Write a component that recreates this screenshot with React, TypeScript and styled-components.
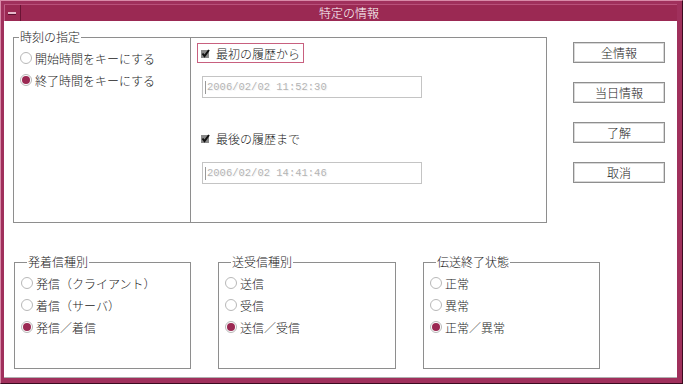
import { createGlobalStyle, styled } from "styled-components";

const GlobalStyle = createGlobalStyle`
  html, body {
    margin: 0;
    padding: 0;
    width: 683px;
    height: 384px;
    overflow: hidden;
    background: #ffffff;
  }
  body {
    font-family: "Noto Sans CJK JP", "Noto Sans", sans-serif;
    font-size: 12px;
    font-weight: 300;
    color: #1a1a1a;
  }
`;

const Frame = styled.div`
  width: 683px;
  height: 384px;
  box-sizing: border-box;
  background: #a0305c;
  border-top: 1px solid #d88aa8;
  border-left: 1px solid #d88aa8;
  border-right: 1px solid #3c0b20;
  border-bottom: 1px solid #3c0b20;
  padding: 3px 5px 5px 3px;
  display: flex;
  flex-direction: column;
`;

const TitleBar = styled.div`
  height: 17px;
  display: flex;
  background: #9b2953;
  border-top: 1px solid #b9507a;
  box-sizing: border-box;
`;

const MinBox = styled.div`
  width: 16px;
  display: flex;
  align-items: center;
  justify-content: center;
  border-right: 1px solid #6a1434;
  box-shadow: inset 1px 0 0 #c06088;
`;

const MinBar = styled.div`
  width: 8px;
  height: 2px;
  background: #e6b8ca;
  border-bottom: 1px solid #5a1030;
`;

const Title = styled.div`
  flex: 1;
  text-align: center;
  color: #ffffff;
  font-size: 12px;
  line-height: 16px;
`;

const Body = styled.div`
  flex: 1;
  background: #ffffff;
  border-bottom: 1px solid #b0b0b0;
  display: flex;
  flex-direction: column;
`;

const TopRow = styled.div`
  display: flex;
  align-items: flex-start;
  padding: 9px 0 0 9px;
`;

const BottomRow = styled.div`
  display: flex;
  align-items: flex-start;
  padding: 32px 0 0 10px;
  gap: 27px;
`;

const Group = styled.div<{ $w: number; $h: number }>`
  width: ${({ $w }) => $w}px;
  height: ${({ $h }) => $h}px;
  margin-top: 7px;
  box-sizing: border-box;
  border: 1px solid #8e8e8e;
  display: flex;
  flex-direction: column;
  padding-left: 6px;
`;

const GroupTitle = styled.div<{ $indent: number }>`
  align-self: flex-start;
  margin: -8px 0 3px ${({ $indent }) => $indent}px;
  padding: 0 1px;
  background: #ffffff;
  line-height: 14px;
`;

const RadioRow = styled.div`
  height: 22px;
  display: flex;
  align-items: center;
  gap: 3px;
  white-space: nowrap;
`;

const RadioDot = styled.span<{ $on?: boolean }>`
  width: 12px;
  height: 12px;
  box-sizing: border-box;
  border-radius: 50%;
  border: 1px solid #b8b8b8;
  background: #ffffff;
  display: flex;
  align-items: center;
  justify-content: center;
  &::after {
    content: "";
    width: 8px;
    height: 8px;
    border-radius: 50%;
    background: ${({ $on }) => ($on ? "#9b2953" : "transparent")};
  }
`;

const RangeBox = styled.div`
  width: 357px;
  height: 186px;
  margin: 7px 0 0 -1px;
  box-sizing: border-box;
  border: 1px solid #8e8e8e;
  display: flex;
  flex-direction: column;
  align-items: flex-start;
  padding: 5px 0 0 6px;
`;

const CheckRow = styled.div<{ $focus?: boolean; $top?: number }>`
  height: 20px;
  box-sizing: border-box;
  margin-top: ${({ $top }) => $top ?? 0}px;
  border: 1px solid ${({ $focus }) => ($focus ? "#c8607f" : "transparent")};
  display: flex;
  align-items: center;
  gap: 6px;
  padding: 0 3px;
  white-space: nowrap;
`;

const DateField = styled.div<{ $top: number }>`
  width: 220px;
  height: 22px;
  box-sizing: border-box;
  margin: ${({ $top }) => $top}px 0 0 5px;
  border: 1px solid #c4c4c4;
  display: flex;
  align-items: center;
  padding-left: 2px;
  font-family: "Liberation Mono", "DejaVu Sans Mono", monospace;
  font-size: 10.5px;
  color: #b4b4b4;
  text-shadow: 1px 1px 0 #f4f4f4;
`;

const Caret = styled.span`
  width: 1px;
  height: 13px;
  background: #9a9a9a;
  margin-right: 1px;
`;

const ButtonColumn = styled.div`
  display: flex;
  flex-direction: column;
  gap: 19px;
  margin: 12px 0 0 26px;
`;

const Button = styled.button`
  width: 92px;
  height: 21px;
  box-sizing: border-box;
  background: #ffffff;
  border: 1px solid #8e8e8e;
  box-shadow: inset 1px 1px 0 #d8d8d8, inset -1px -1px 0 #d8d8d8;
  font-family: "Noto Sans CJK JP", sans-serif;
  font-size: 12px;
  font-weight: 300;
  color: #1a1a1a;
  padding: 0;
  line-height: 18px;
`;

function CheckMark() {
  return (
    <svg width="9" height="9" viewBox="0 0 9 9">
      <rect x="0" y="1" width="8" height="8" fill="#8a8a8a" />
      <path d="M1.5 4.5 L3.5 7 L8 1" stroke="#111" strokeWidth="2" fill="none" />
    </svg>
  );
}

type RadioGroupProps = {
  title: string;
  items: string[];
  selected: number;
  indent: number;
  w: number;
  h: number;
};

function RadioGroup({ title, items, selected, indent, w, h }: RadioGroupProps) {
  return (
    <Group $w={w} $h={h}>
      <GroupTitle $indent={indent}>{title}</GroupTitle>
      {items.map((label, i) => (
        <RadioRow key={label}>
          <RadioDot $on={i === selected} />
          {label}
        </RadioRow>
      ))}
    </Group>
  );
}

export default function App() {
  return (
    <>
      <GlobalStyle />
      <Frame>
        <TitleBar>
          <MinBox>
            <MinBar />
          </MinBox>
          <Title>特定の情報</Title>
        </TitleBar>
        <Body>
          <TopRow>
            <RadioGroup
              title="時刻の指定"
              items={["開始時間をキーにする", "終了時間をキーにする"]}
              selected={1}
              indent={-1}
              w={178}
              h={186}
            />
            <RangeBox>
              <CheckRow $focus>
                <CheckMark />
                最初の履歴から
              </CheckRow>
              <DateField $top={13}>
                <Caret />
                2006/02/02 11:52:30
              </DateField>
              <CheckRow $top={30}>
                <CheckMark />
                最後の履歴まで
              </CheckRow>
              <DateField $top={14}>
                <Caret />
                2006/02/02 14:41:46
              </DateField>
            </RangeBox>
            <ButtonColumn>
              <Button>全情報</Button>
              <Button>当日情報</Button>
              <Button>了解</Button>
              <Button>取消</Button>
            </ButtonColumn>
          </TopRow>
          <BottomRow>
            <RadioGroup
              title="発着信種別"
              items={["発信（クライアント）", "着信（サーバ）", "発信／着信"]}
              selected={2}
              indent={6}
              w={177}
              h={107}
            />
            <RadioGroup
              title="送受信種別"
              items={["送信", "受信", "送信／受信"]}
              selected={2}
              indent={6}
              w={178}
              h={107}
            />
            <RadioGroup
              title="伝送終了状態"
              items={["正常", "異常", "正常／異常"]}
              selected={2}
              indent={6}
              w={177}
              h={107}
            />
          </BottomRow>
        </Body>
      </Frame>
    </>
  );
}
